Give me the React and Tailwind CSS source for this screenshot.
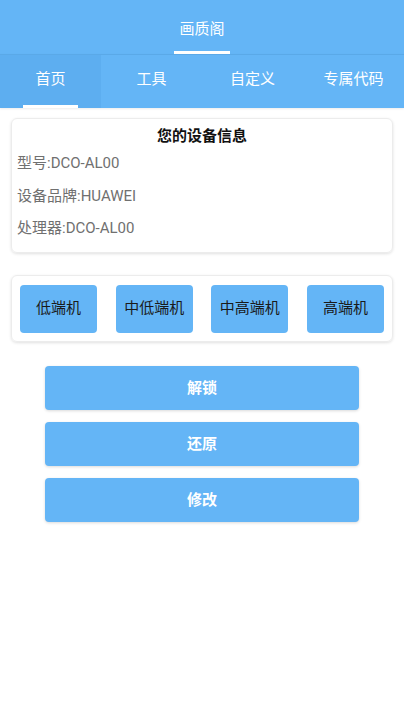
import React from "react";

const font = { fontFamily: 'Roboto, "Noto Sans CJK SC", sans-serif' };

export default function App() {
  const tabs = ["首页", "工具", "自定义", "专属代码"];
  const levels = ["低端机", "中低端机", "中高端机", "高端机"];
  const actions = ["解锁", "还原", "修改"];
  return (
    <div className="w-[404px] h-[718px] bg-white flex flex-col" style={font}>
      <div className="h-[54px] bg-[#64b5f6] flex flex-col items-center justify-end">
        <div className="text-white text-[15px] leading-none mb-[14px]">画质阁</div>
        <div className="w-[56px] h-[3px] bg-white"></div>
      </div>
      <div className="h-[54px] bg-[#64b5f6] border-t border-[#5aa9e8] grid grid-cols-4 shadow-[0_1px_2px_rgba(0,0,0,0.08)]">
        {tabs.map((t, i) => (
          <div
            key={t}
            className={
              "flex flex-col items-center justify-end text-white text-[15px] " +
              (i === 0 ? "bg-[#5daef0]" : "")
            }
          >
            <div className="leading-none mb-[18px]">{t}</div>
            <div className={"w-[55px] h-[3px] " + (i === 0 ? "bg-white" : "bg-transparent")}></div>
          </div>
        ))}
      </div>
      <div className="px-[11px] pt-[10px] flex flex-col">
        <div className="h-[135px] rounded-[6px] border border-[#ececec] shadow-[0_1px_3px_rgba(0,0,0,0.12)] flex flex-col pt-[7px] px-[5px]">
          <div className="text-center text-[15px] font-bold text-[#111] leading-[20px]">您的设备信息</div>
          <div className="text-[15px] text-[#707070] leading-[20px] mt-[7px]">型号:DCO-AL00</div>
          <div className="text-[15px] text-[#707070] leading-[20px] mt-[13px]">设备品牌:HUAWEI</div>
          <div className="text-[15px] text-[#707070] leading-[20px] mt-[12px]">处理器:DCO-AL00</div>
        </div>
        <div className="mt-[22px] h-[67px] rounded-[6px] border border-[#ececec] shadow-[0_1px_3px_rgba(0,0,0,0.12)] flex items-center justify-between px-[8px]">
          {levels.map((l) => (
            <div
              key={l}
              className="w-[77px] h-[48px] rounded-[4px] bg-[#64b5f6] flex items-center justify-center text-[15px] text-[#1a1a1a]"
            >
              {l}
            </div>
          ))}
        </div>
      </div>
      <div className="px-[45px] mt-[24px] flex flex-col gap-[12px]">
        {actions.map((a) => (
          <div
            key={a}
            className="h-[44px] rounded-[4px] bg-[#64b5f6] shadow-[0_1px_3px_rgba(0,0,0,0.15)] flex items-center justify-center text-white font-bold text-[15px]"
          >
            {a}
          </div>
        ))}
      </div>
    </div>
  );
}
